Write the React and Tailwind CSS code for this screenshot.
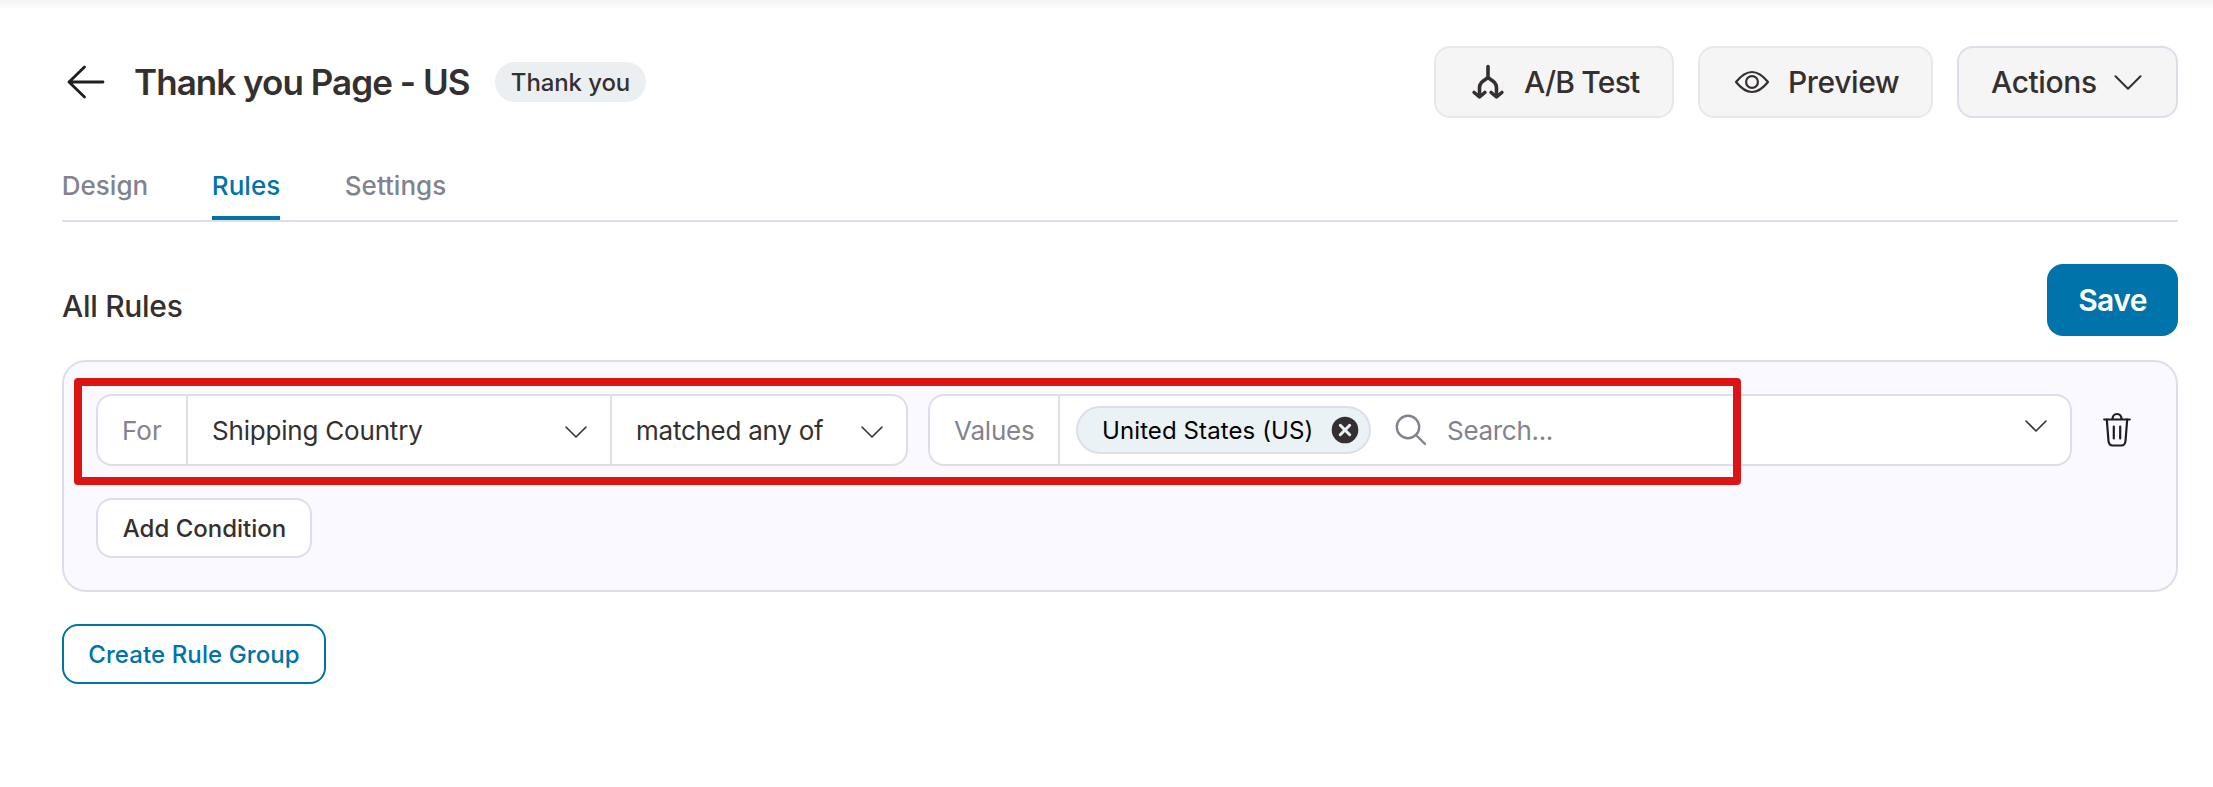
import React from 'react'

const tabs = [
  { name: 'Design', width: 'w-[86px]' },
  { name: 'Rules', width: 'w-[68px]' },
  { name: 'Settings', width: 'w-[103px]' },
]

const BackArrow = () => (
  <svg width="38" height="34" viewBox="0 0 38 34" fill="none" stroke="#1e1e1e" strokeWidth="2.8" strokeLinecap="round" strokeLinejoin="round">
    <path d="M36 17H2M17.500 2L2 17l15.500 15" />
  </svg>
)

const SplitIcon = () => (
  <svg width="32" height="36" viewBox="0 0 32 36" fill="none" stroke="#353030" strokeWidth="3.6" strokeLinecap="round" strokeLinejoin="round">
    <path d="M16 2.500V13.500M16 13.500C12 16.500 7.500 18 7.500 24V32M16 13.500C20 16.500 24.500 18 24.500 24V32" />
    <path d="M2.200 28.500L7.500 33L12.800 28.500M19.200 28.500L24.500 33L29.800 28.500" />
  </svg>
)

const EyeIcon = () => (
  <svg width="36" height="24" viewBox="0 0 36 24" fill="none" stroke="#353030" strokeWidth="2.2" strokeLinejoin="round">
    <path d="M2 12C7.500 5.200 12.500 2 18 2s10.500 3.200 16 10c-5.500 6.800-10.500 10-16 10S7.500 18.800 2 12z" />
    <circle cx="18" cy="12" r="5.900" />
  </svg>
)

const Chevron = ({ className }) => (
  <svg className={className} viewBox="0 0 22 12" fill="none" stroke="#353030" strokeLinecap="round" strokeLinejoin="round">
    <path d="M1 1l10 10L21 1" strokeWidth="1.600" />
  </svg>
)

const CloseBadge = () => (
  <svg width="28" height="28" viewBox="0 0 28 28">
    <circle cx="14" cy="14" r="13.300" fill="#353030" />
    <path d="M9.300 9.300l9.400 9.400M18.700 9.300l-9.400 9.400" stroke="#eaf2f5" strokeWidth="3" strokeLinecap="round" />
  </svg>
)

const SearchIcon = () => (
  <svg width="32" height="32" viewBox="0 0 32 32" fill="none" stroke="#82838e" strokeWidth="2.400" strokeLinecap="round">
    <circle cx="13" cy="13" r="11.200" />
    <path d="M21 21l9 9" />
  </svg>
)

const TrashIcon = () => (
  <svg width="28" height="36" viewBox="0 0 28 36" fill="none" stroke="#1e1e1e" strokeWidth="2.2" strokeLinecap="round" strokeLinejoin="round">
    <path d="M1.200 7.500h25.600M9.500 7.500c0-3.300 1.800-5.500 4.500-5.500s4.500 2.200 4.500 5.500" />
    <path d="M3.800 7.500l1.700 21.500c.3 3.200 1.700 4.500 4.300 4.500h8.400c2.600 0 4-1.300 4.300-4.500l1.700-21.500" />
    <path d="M10.800 14.500v12M17.200 14.500v12" />
  </svg>
)

const App = () => {
  return (
    <div className="h-[787px] overflow-hidden bg-white pl-[62px] pr-[35px] font-['Inter','Liberation_Sans',sans-serif] text-[#353030] whitespace-nowrap">
      <div className="-ml-[62px] -mr-[35px] h-2.5 bg-linear-to-b from-[#f4f4f4] to-white" />

      {/* page header */}
      <header className="mt-9 flex h-[72px] items-center">
        <div className="ml-[5px] w-[66px]">
          <BackArrow />
        </div>
        <h1 className="w-[362px] pl-px text-[35px] leading-none font-[560] tracking-[-0.95px]">Thank you Page - US</h1>
        <span className="flex h-10 w-[151px] items-center justify-center rounded-full bg-[#ebeff2] pt-px text-2xl font-medium tracking-[-0.1px]">
          Thank you
        </span>
        <div className="ml-auto flex gap-6 text-[30px] font-medium">
          <button className="flex h-[72px] w-[240px] items-center rounded-2xl border-2 border-[#e8e8e8] bg-[#f5f5f5] pl-[36px] tracking-[-0.8px]">
            <SplitIcon />
            <span className="ml-5">A/B Test</span>
          </button>
          <button className="flex h-[72px] w-[235px] items-center rounded-2xl border-2 border-[#e8e8e8] bg-[#f5f5f5] pl-[34px] tracking-[-0.4px]">
            <EyeIcon />
            <span className="ml-[18px]">Preview</span>
          </button>
          <button className="flex h-[72px] w-[221px] items-center justify-between rounded-2xl border-2 border-[#dedeeb] bg-[#f5f5f5] pl-8 pr-[34px] tracking-[-0.4px]">
            Actions
            <Chevron className="h-[15px] w-7" />
          </button>
        </div>
      </header>

      <nav className="mt-[46px] flex h-[58px] gap-16 border-b-2 border-[#dedeeb] text-[26px] font-medium text-[#82838e]">
        {tabs.map((tab) => (
          <div
            key={tab.name}
            className={`flex h-14 justify-center pt-[2px] ${tab.width} ${
              tab.name === 'Rules' ? 'border-b-4 border-[#0073aa] text-[#0073aa]' : ''
            }`}
          >
            <span className="h-10 leading-10">{tab.name}</span>
          </div>
        ))}
      </nav>

      <div className="mt-[42px] flex h-[72px] items-center justify-between">
        <h2 className="pt-[12px] text-[30px] font-medium tracking-[-0.3px]">All Rules</h2>
        <button className="h-[72px] w-[131px] rounded-2xl bg-[#0073aa] text-[30px] font-semibold tracking-[-0.6px] text-white">
          Save
        </button>
      </div>

      {/* rule group */}
      <section className="relative mt-6 h-[232px] rounded-3xl border-2 border-[#dedeeb] bg-[#faf9ff] px-8 pt-8">
        <div className="flex h-[72px] text-[26px]">
          <div className="flex w-[812px] rounded-2xl border-2 border-[#dedeeb] bg-white">
            <div className="flex w-[90px] items-center border-r-2 border-[#dedeeb] pl-6 text-[#82838e]">For</div>
            <div className="flex w-[424px] items-center justify-between border-r-2 border-[#dedeeb] pl-6 pr-[23px] tracking-[-0.2px]">
              Shipping Country
              <Chevron className="mt-1 h-3 w-[22px]" />
            </div>
            <div className="flex flex-1 items-center justify-between pl-6 pr-[23px] tracking-[-0.25px]">
              matched any of
              <Chevron className="mt-1 h-3 w-[22px]" />
            </div>
          </div>

          <div className="ml-5 flex w-[1144px] rounded-2xl border-2 border-[#dedeeb] bg-white">
            <div className="flex w-[130px] items-center border-r-2 border-[#dedeeb] pl-6 tracking-[-0.2px] text-[#82838e]">Values</div>
            <div className="flex flex-1 items-center pl-4 pr-[23px]">
              <span className="flex h-12 w-[295px] items-center justify-between rounded-full border-2 border-[#dedeeb] bg-[#eaf2f5] pl-6 pr-[10px] text-2xl tracking-[0.1px] text-black">
                <span className="pt-px">United States (US)</span>
                <CloseBadge />
              </span>
              <span className="ml-6">
                <SearchIcon />
              </span>
              <span className="ml-5 tracking-[-0.3px] text-[#82838e]">Search...</span>
              <Chevron className="-mt-2 ml-auto h-3 w-[22px]" />
            </div>
          </div>

          <button className="ml-[31px]">
            <TrashIcon />
          </button>
        </div>

        <button className="mt-8 h-[60px] w-[216px] rounded-2xl border-2 border-[#dedeeb] bg-white pt-0.5 pl-px text-2xl font-medium">
          Add Condition
        </button>

        {/* highlight frame over the condition row */}
        <div className="absolute top-4 left-2.5 h-[107px] w-[1667px] rounded border-8 border-[#db1414]" />
      </section>

      <button className="mt-8 h-[60px] w-[264px] rounded-2xl border-2 border-[#0073aa] bg-white pt-0.5 text-2xl font-medium tracking-[0.1px] text-[#0073aa]">
        Create Rule Group
      </button>
    </div>
  )
}

export default App
